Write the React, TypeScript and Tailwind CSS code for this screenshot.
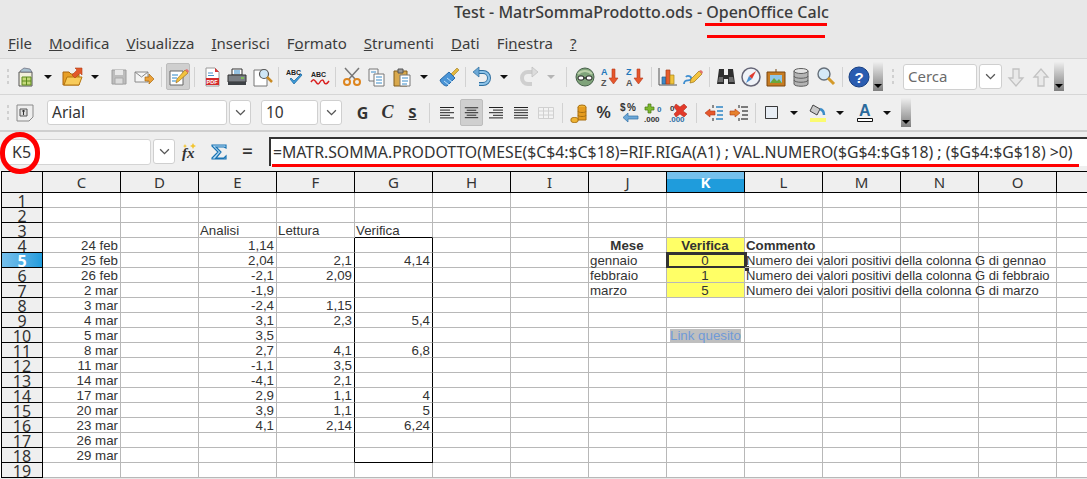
import React from "react"

const ui = "font-['Noto_Sans',sans-serif]"

function Ic({ children }: { children: React.ReactNode }) {
  return (
    <svg viewBox="0 0 22 22" className="w-[22px] h-[22px]">
      {children}
    </svg>
  )
}

function Slot({ children, className = "w-[25px]" }: { children?: React.ReactNode; className?: string }) {
  return <div className={`flex items-center justify-center shrink-0 h-full ${className}`}>{children}</div>
}

function Dd({ className = "w-[22px]", off = false }: { className?: string; off?: boolean }) {
  return (
    <Slot className={className}>
      <span className={`w-0 h-0 border-l-[4px] border-r-[4px] border-t-[4px] border-l-transparent border-r-transparent ${off ? "border-t-[#b5b5b5]" : "border-t-[#111]"}`} />
    </Slot>
  )
}

function Sep({ className = "w-[8px]" }: { className?: string }) {
  return (
    <Slot className={className}>
      <span className="w-px h-[20px] bg-[#d2d2d2]" />
    </Slot>
  )
}

function Grip({ className }: { className: string }) {
  return (
    <Slot className={className}>
      <span className="flex flex-col gap-[3px]">
        <span className="w-[2px] h-[3px] bg-[#d0d0d0]" />
        <span className="w-[2px] h-[3px] bg-[#d0d0d0]" />
        <span className="w-[2px] h-[3px] bg-[#d0d0d0]" />
      </span>
    </Slot>
  )
}

function Overflow({ className }: { className: string }) {
  return (
    <div className={`w-[10px] h-[29px] shrink-0 bg-gradient-to-b from-[#eeeeee] to-[#7f7f7f] flex items-end justify-center pb-[3px] ${className}`}>
      <span className="w-0 h-0 border-l-[4px] border-r-[4px] border-t-[4px] border-l-transparent border-r-transparent border-t-black" />
    </div>
  )
}

function Chevron() {
  return (
    <svg viewBox="0 0 12 8" className="w-[11px] h-[7px]">
      <path d="M1 1.5 6 6.5 11 1.5" fill="none" stroke="#555" strokeWidth="1.5" />
    </svg>
  )
}

function Combo({ className }: { className: string }) {
  return (
    <div className={`h-[25px] bg-white border border-[#cfcfcf] rounded-[3px] flex items-center justify-center shrink-0 ${className}`}>
      <Chevron />
    </div>
  )
}

const lines = (x: number[], w: number[], c = "#222") => (
  <g stroke={c} strokeWidth="1">
    {x.map((v, i) => (
      <path key={i} d={`M${v} ${5.5 + i * 2.6}h${w[i]}`} />
    ))}
  </g>
)

const MiniText = ({ x, y, s, c, t, w = 700 }: { x: number; y: number; s: number; c: string; t: string; w?: number }) => (
  <text x={x} y={y} fontSize={s} fill={c} fontWeight={w} fontFamily="Liberation Sans, sans-serif">
    {t}
  </text>
)

function Toolbar1() {
  return (
    <div className="h-[36px] flex items-center pl-[3px] bg-[#efefef] border-b border-[#d6d6d6]">
      <Grip className="w-[9px]" />
      <Slot>
        <Ic>
          <path d="M5 6h13v14H5z" fill="#f2f0dc" stroke="#555" />
          <path d="M8 11h9v8H8z" fill="#c5d97a" stroke="#5d8a1c" />
          <path d="M8 15h9M12.500 11v8" stroke="#5d8a1c" />
          <path d="M6 5l4-3 6 1 2 3H7z" fill="#a9c0cf" stroke="#667" strokeWidth=".7" />
        </Ic>
      </Slot>
      <Dd />
      <Slot>
        <Ic>
          <path d="M2 6h6l2 2h8v11H2z" fill="#e79f27" stroke="#a9650e" />
          <path d="M3 19l3-8h15l-3 8z" fill="#f8cb5a" stroke="#b5760f" />
          <path d="M11 9l5-5-2-2h7v7l-2-2-5 5z" fill="#e2582a" stroke="#b43c14" strokeWidth=".6" />
        </Ic>
      </Slot>
      <Dd />
      <Slot>
        <Ic>
          <path d="M4 4h14v14H4z" fill="#bdbdbd" stroke="#9e9e9e" />
          <path d="M7 4h8v5H7z" fill="#e8e8e8" />
          <path d="M7 12h8v6H7z" fill="#dcdcdc" stroke="#aaa" />
        </Ic>
      </Slot>
      <Slot>
        <Ic>
          <path d="M2 6h13v10H2z" fill="#f5f5f5" stroke="#8a8a8a" />
          <path d="M2 6l6.500 5L15 6" fill="none" stroke="#8a8a8a" />
          <path d="M12 11h4V8l5 5-5 5v-3h-4z" fill="#eca23a" stroke="#a96a10" strokeWidth=".7" />
        </Ic>
      </Slot>
      <Sep className="w-[10px]" />
      <div className="w-[24px] h-[27px] bg-[#cfcfcf] border border-[#bdbdbd] rounded-[2px] flex items-center justify-center shrink-0">
        <Ic>
          <path d="M3 5h13v14H3z" fill="#fff" stroke="#666" />
          <path d="M5 9h6M5 12h5M5 15h4" stroke="#2c86c8" strokeWidth="1.200" />
          <path d="M9 17l1-4 8-9 3 3-9 8z" fill="#f3c33e" stroke="#a2701a" strokeWidth=".7" />
          <path d="M18 4l3 3 1-2-2-2z" fill="#e2726d" />
        </Ic>
      </div>
      <Sep className="w-[9px]" />
      <Slot>
        <Ic>
          <path d="M5 2h9l4 4v14H5z" fill="#fff" stroke="#999" />
          <path d="M14 2l4 4h-4z" fill="#d93636" />
          <path d="M7 7h5M7 9.500h6" stroke="#4a91c8" />
          <path d="M5 12h13v7H5z" fill="#d42a2a" />
          <MiniText x={5.600} y={18} s={5.500} c="#fff" t="PDF" />
        </Ic>
      </Slot>
      <Slot>
        <Ic>
          <path d="M6 3h10v6H6z" fill="#fff" stroke="#333" />
          <path d="M8 5h6M8 7h6" stroke="#2c86c8" />
          <path d="M2 9h18v7H2z" fill="#7a7f85" stroke="#333" />
          <path d="M2 16h18v3H2z" fill="#3d4145" />
          <path d="M15 12h3" stroke="#7fd14d" strokeWidth="1.500" />
        </Ic>
      </Slot>
      <Slot>
        <Ic>
          <path d="M3 4h10l3 3v13H3z" fill="#fff" stroke="#777" />
          <circle cx="13" cy="8" r="4.500" fill="#cfe6f5" stroke="#555" strokeWidth="1.200" />
          <path d="M16 11l5 5" stroke="#c98a22" strokeWidth="2.500" />
        </Ic>
      </Slot>
      <Sep />
      <Slot>
        <Ic>
          <MiniText x={2} y={9} s={7} c="#222" t="ABC" />
          <path d="M6 13l4 5 8-9-1-1-7 7-3-3z" fill="#3d9ad6" stroke="#1f6fa8" strokeWidth=".8" />
        </Ic>
      </Slot>
      <Slot>
        <Ic>
          <MiniText x={2} y={11} s={7} c="#222" t="ABC" />
          <path d="M2 16c2-3 3-3 5 0s3 2 4 0 3-3 4 0 3 2 5-1" fill="none" stroke="#d91f1f" strokeWidth="1.500" />
        </Ic>
      </Slot>
      <Sep className="w-[7px]" />
      <Slot>
        <Ic>
          <path d="M18 2 8 13M4 2l10 11" stroke="#777" strokeWidth="1.500" />
          <circle cx="6" cy="16" r="3" fill="none" stroke="#dd851e" strokeWidth="2" />
          <circle cx="16" cy="16" r="3" fill="none" stroke="#dd851e" strokeWidth="2" />
        </Ic>
      </Slot>
      <Slot>
        <Ic>
          <path d="M3 3h9v12H3z" fill="#f8f8f8" stroke="#777" />
          <path d="M8 8h10v12H8z" fill="#fff" stroke="#777" />
          <path d="M5 6h5M10 11h6M10 14h6M10 17h6" stroke="#3b8cc8" />
        </Ic>
      </Slot>
      <Slot>
        <Ic>
          <path d="M3 5h13v15H3z" fill="#d9a94d" stroke="#805d1c" />
          <path d="M7 3h5v4H7z" fill="#9a9a9a" stroke="#555" />
          <path d="M9 9h10v11H9z" fill="#fff" stroke="#777" />
          <path d="M11 12h6M11 15h6M11 18h5" stroke="#3b8cc8" />
        </Ic>
      </Slot>
      <Dd className="w-[20px]" />
      <Slot className="w-[25px] ml-[2px]">
        <Ic>
          <path d="M13 8l6-6 2 2-6 6z" fill="#e5b83d" stroke="#9a7a1c" strokeWidth=".6" />
          <path d="M2 14l9-8 6 6-8 8c-3 0-6-3-7-6z" fill="#4a94d6" stroke="#2b6ba8" />
          <path d="M6 15l5 4M9 12l5 4" stroke="#bfe0f7" />
        </Ic>
      </Slot>
      <Sep />
      <Slot>
        <Ic>
          <path d="M4 6h8a6 6 0 0 1 0 12H8" fill="none" stroke="#2d6d9e" strokeWidth="4" />
          <path d="M4 6h8a6 6 0 0 1 0 12H8" fill="none" stroke="#8dc3e8" strokeWidth="2.200" />
          <path d="M8 1v10L2 6z" fill="#6ca8d6" stroke="#2d6d9e" strokeWidth=".7" />
        </Ic>
      </Slot>
      <Dd className="w-[20px]" />
      <Slot className="w-[25px] ml-[2px]">
        <Ic>
          <path d="M18 6h-8a6 6 0 0 0 0 12h4" fill="none" stroke="#cfcfcf" strokeWidth="4" />
          <path d="M14 1v10l6-5z" fill="#dcdcdc" stroke="#bcbcbc" strokeWidth=".7" />
        </Ic>
      </Slot>
      <Dd className="w-[20px]" off />
      <Sep className="w-[11px]" />
      <Slot>
        <Ic>
          <circle cx="11" cy="11" r="9" fill="#7fa37a" stroke="#47604a" />
          <path d="M4 8c4-4 10-4 14 0" fill="none" stroke="#b9d0a9" strokeWidth="2" />
          <rect x="4" y="10" width="6" height="4" rx="2" fill="#fff" stroke="#222" />
          <rect x="12" y="10" width="6" height="4" rx="2" fill="#fff" stroke="#222" />
          <path d="M9 12h4" stroke="#222" />
        </Ic>
      </Slot>
      <Slot>
        <Ic>
          <MiniText x={2} y={9} s={9} c="#2277bb" t="A" />
          <MiniText x={2} y={20} s={9} c="#555" t="Z" />
          <path d="M13 3h3v9h3l-4.500 6L10 12h3z" fill="#e6572c" stroke="#b5371a" strokeWidth=".6" />
        </Ic>
      </Slot>
      <Slot>
        <Ic>
          <MiniText x={2} y={9} s={9} c="#2277bb" t="Z" />
          <MiniText x={2} y={20} s={9} c="#555" t="A" />
          <path d="M13 3h3v9h3l-4.500 6L10 12h3z" fill="#e6572c" stroke="#b5371a" strokeWidth=".6" />
        </Ic>
      </Slot>
      <Sep />
      <Slot>
        <Ic>
          <path d="M2 2v17h18" fill="none" stroke="#555" />
          <path d="M5 11h4v7H5z" fill="#3d89c9" stroke="#245f8e" strokeWidth=".7" />
          <path d="M9 4h4v14H9z" fill="#e65d2d" stroke="#a83c14" strokeWidth=".7" />
          <path d="M13 9h4v9h-4z" fill="#f1c33c" stroke="#a8841a" strokeWidth=".7" />
        </Ic>
      </Slot>
      <Slot>
        <Ic>
          <path d="M2 18c0-6 6-2 7-5s-4-4-5-2" fill="none" stroke="#3f8ed0" strokeWidth="1.800" />
          <path d="M8 17l1-4 8-8 3 3-8 8z" fill="#f3c33e" stroke="#9c7416" strokeWidth=".7" />
          <path d="M17 5l3 3 1-2-2-2z" fill="#e2726d" />
        </Ic>
      </Slot>
      <Sep />
      <Slot>
        <Ic>
          <path d="M4 3h5v6h4V3h5l2 15h-7v-5H9v5H2z" fill="#2e2e2e" />
          <path d="M4 11h4v5H3zM14 11h4l1 5h-5z" fill="#6b6b6b" />
        </Ic>
      </Slot>
      <Slot>
        <Ic>
          <circle cx="11" cy="11" r="9" fill="#f0f3f8" stroke="#667" strokeWidth="1.500" />
          <path d="M16 5l-4 8-3-3z" fill="#e03a2e" />
          <path d="M6 17l3-7 3 3z" fill="#4a8fd0" />
        </Ic>
      </Slot>
      <Slot>
        <Ic>
          <path d="M2 6h18v14H2z" fill="#c77c22" stroke="#7a4610" />
          <path d="M5 9h12v8H5z" fill="#8ec6ea" />
          <path d="M5 17l4-5 3 3 2-2 3 4z" fill="#6aa63c" />
          <path d="M11 6l0-3" stroke="#7a4610" />
        </Ic>
      </Slot>
      <Slot>
        <Ic>
          <path d="M4 5v13c0 3 14 3 14 0V5z" fill="#b4b4b4" stroke="#5f5f5f" />
          <ellipse cx="11" cy="5" rx="7" ry="2.500" fill="#e3e3e3" stroke="#5f5f5f" />
          <path d="M4 10c0 3 14 3 14 0M4 14c0 3 14 3 14 0" fill="none" stroke="#5f5f5f" />
        </Ic>
      </Slot>
      <Slot>
        <Ic>
          <circle cx="9" cy="8" r="6" fill="#d5e9f7" stroke="#66707a" strokeWidth="1.400" />
          <path d="M13 12l6 6" stroke="#d49a2a" strokeWidth="3" />
        </Ic>
      </Slot>
      <Sep />
      <Slot>
        <Ic>
          <circle cx="11" cy="11" r="10" fill="#2a5cb0" stroke="#173f82" />
          <MiniText x={6.500} y={17} s={15} c="#fff" t="?" />
        </Ic>
      </Slot>
      <Overflow className="ml-[2px]" />
      <Grip className="w-[20px]" />
      <div className={`${ui} w-[74px] h-[26px] bg-white border border-[#d0d0d0] rounded-[3px] flex items-center pl-[4px] text-[15px] text-[#6b6b6b] shrink-0`}>Cerca</div>
      <Combo className="w-[23px] ml-[2px]" />
      <Slot className="w-[25px] ml-px">
        <Ic>
          <path d="M8 3h6v9h4l-7 8-7-8h4z" fill="#e9e9e9" stroke="#c2c2c2" strokeWidth="1.300" />
        </Ic>
      </Slot>
      <Slot>
        <Ic>
          <path d="M8 20h6v-9h4l-7-8-7 8h4z" fill="#e9e9e9" stroke="#c2c2c2" strokeWidth="1.300" />
        </Ic>
      </Slot>
      <Overflow className="ml-[1px]" />
    </div>
  )
}

function Toolbar2() {
  return (
    <div className="h-[37px] flex items-center pl-[3px] bg-[#efefef] border-b-2 border-[#cfcfcf]">
      <Grip className="w-[9px]" />
      <Slot>
        <Ic>
          <path d="M3 3h16v12l-4 4H3z" fill="#eeeeee" stroke="#8a8a8a" />
          <path d="M6 7h7v7H6z" fill="#dddddd" stroke="#555" />
          <path d="M9.500 8v5M8 9h3" stroke="#333" />
        </Ic>
      </Slot>
      <div className="w-[180px] h-[25px] ml-[10px] bg-white border border-[#d0d0d0] rounded-[3px] flex items-center pl-[4px] text-[#333] text-[15.500px] font-['Noto_Sans',sans-serif] shrink-0">Arial</div>
      <Combo className="w-[22px] ml-[2px]" />
      <div className={`${ui} w-[57px] h-[25px] ml-[10px] bg-white border border-[#d0d0d0] rounded-[3px] flex items-center pl-[4px] text-[#333] text-[15.500px] shrink-0`}>10</div>
      <Combo className="w-[22px] ml-[2px]" />
      <Slot className="w-[25px] ml-[8px]">
        <span className={`${ui} font-bold text-[16px] text-[#333]`}>G</span>
      </Slot>
      <Slot>
        <span className="font-['Liberation_Serif',serif] italic font-bold text-[18px] text-[#333]">C</span>
      </Slot>
      <Slot>
        <span className={`${ui} font-bold text-[15px] text-[#333] underline`}>S</span>
      </Slot>
      <Sep className="w-[9px]" />
      <Slot><Ic>{lines([4, 4, 4, 4, 4], [14, 10, 14, 10, 14])}</Ic></Slot>
      <div className="w-[23px] h-[27px] ml-[1px] bg-[#cfcfcf] border border-[#bdbdbd] rounded-[2px] flex items-center justify-center shrink-0">
        <Ic>{lines([4, 6, 4, 6, 4], [14, 10, 14, 10, 14])}</Ic>
      </div>
      <Slot><Ic>{lines([4, 8, 4, 8, 4], [14, 10, 14, 10, 14])}</Ic></Slot>
      <Slot><Ic>{lines([4, 4, 4, 4, 4], [14, 14, 14, 14, 14])}</Ic></Slot>
      <Slot>
        <Ic>
          <path d="M3.500 5.500h15v11h-15zM3.500 9h15M3.500 13h15M8.500 5.500v11M13.500 5.500v11" fill="#f3f3f3" stroke="#d0d0d0" />
        </Ic>
      </Slot>
      <Sep className="w-[8px]" />
      <Slot>
        <Ic>
          <ellipse cx="14" cy="5" rx="4" ry="2" fill="#efb434" stroke="#a86f10" />
          <path d="M10 5v13h8V5" fill="#e59c20" stroke="#a86f10" />
          <path d="M10 9c0 2 8 2 8 0M10 13c0 2 8 2 8 0" fill="none" stroke="#a86f10" />
          <path d="M3 17c0-2 7-2 7 0v2c0 2-7 2-7 0z" fill="#efb434" stroke="#a86f10" />
        </Ic>
      </Slot>
      <Slot>
        <span className="font-['Liberation_Sans',sans-serif] font-bold text-[16px] text-[#333]">%</span>
      </Slot>
      <Slot>
        <Ic>
          <MiniText x={2} y={9} s={10} c="#333" t="$" />
          <MiniText x={9} y={9} s={10} c="#333" t="%" />
          <path d="M20 14H10v-3l-5 4.500 5 4.500v-3h10z" fill="#6da8d8" stroke="#2f70a6" strokeWidth=".7" />
        </Ic>
      </Slot>
      <Slot>
        <Ic>
          <path d="M5 2h3v3h3v3H8v3H5V8H2V5h3z" fill="#7dba2e" stroke="#477513" strokeWidth=".7" />
          <MiniText x={14} y={10} s={8} c="#2f70a6" t="0" />
          <MiniText x={1} y={20} s={8} c="#333" t=".000" />
        </Ic>
      </Slot>
      <Slot>
        <Ic>
          <MiniText x={2} y={9} s={8} c="#333" t="0" />
          <path d="M8 2l4 3 4-3 3 3-4 4 4 3-3 3-4-3-4 3-2-3 3-3-3-4z" fill="#e23a2a" stroke="#a4200f" strokeWidth=".5" />
          <MiniText x={1} y={20} s={8} c="#2f70a6" t=".000" />
        </Ic>
      </Slot>
      <Sep className="w-[10px]" />
      <Slot>
        <Ic>
          <path d="M2 11l5-4v2h5v4H7v2z" fill="#e6572c" stroke="#b03614" strokeWidth=".6" />
          <path d="M13 5h7M14 9h6M14 13h6M13 17h7" stroke="#2f86c6" strokeWidth="1.300" />
          <path d="M10 3v3M10 16v3" stroke="#222" />
        </Ic>
      </Slot>
      <Slot>
        <Ic>
          <path d="M12 11L7 7v2H2v4h5v2z" fill="#e6812c" stroke="#b03614" strokeWidth=".6" />
          <path d="M13 5h7M14 9h6M14 13h6M13 17h7" stroke="#555" strokeWidth="1.300" />
          <path d="M11 3v3M11 16v3" stroke="#222" />
        </Ic>
      </Slot>
      <Sep className="w-[8px]" />
      <Slot>
        <svg viewBox="0 0 14 14" className="w-[13px] h-[13px]">
          <path d="M.5.500h13v13H.5z" fill="#e8eef5" stroke="#222" />
        </svg>
      </Slot>
      <Dd className="w-[20px]" />
      <Slot className="w-[25px] ml-[1px]">
        <Ic>
          <path d="M6 3l7 4-3 6-7-4z" fill="#c9c9c9" stroke="#444" />
          <path d="M13 7c3 1 4 3 4 6" fill="none" stroke="#3b8cc8" strokeWidth="2.500" />
          <path d="M3 16h16v4H3z" fill="#fbfb70" />
        </Ic>
      </Slot>
      <Dd className="w-[20px]" />
      <Slot className="w-[25px] ml-[2px]">
        <Ic>
          <MiniText x={5} y={14} s={16} c="#2b6a9c" t="A" />
          <path d="M3.500 16.500h15v3h-15z" fill="#fff" stroke="#111" />
        </Ic>
      </Slot>
      <Dd className="w-[20px]" />
      <Overflow className="ml-[4px]" />
    </div>
  )
}

function FormulaBar() {
  return (
    <div className="h-[39px] flex items-center pl-[3px] bg-[#efefef]">
      <div className={`${ui} w-[148px] h-[26px] bg-white border border-[#d4d4d4] rounded-[3px] flex items-center pl-[8px] text-[16px] text-[#333] shrink-0`}>K5</div>
      <Combo className="w-[22px] ml-[2px]" />
      <Slot className="w-[25px] ml-[2px]">
        <Ic>
          <text x="3" y="17" fontSize="15" fontStyle="italic" fontWeight="700" fill="#333" fontFamily="Liberation Serif, serif">fx</text>
          <path d="M14 2l1 2 2 1-2 1-1 2-1-2-2-1 2-1zM6 3l.7 1.500L8 5l-1.300.7L6 7l-.7-1.300L4 5l1.300-.5z" fill="#f2c531" />
        </Ic>
      </Slot>
      <Slot className="w-[25px] ml-[4px]">
        <Ic>
          <path d="M4 4h14v3l-2-1H8l5 5-5 6h8l2-2v3H4v-1l6-6-6-6z" fill="#bfe0f7" stroke="#1873b3" strokeWidth="1.200" />
        </Ic>
      </Slot>
      <Slot className="w-[25px] ml-[4px]">
        <span className={`${ui} text-[19px] text-[#333] font-medium`}>=</span>
      </Slot>
      <div className={`${ui} flex-1 h-[29px] ml-[9px] bg-white border-l-2 border-t-2 border-[#333] flex items-center pl-[2px] text-[15.800px] text-[#333] whitespace-nowrap overflow-hidden`}>
        =MATR.SOMMA.PRODOTTO(MESE($C$4:$C$18)=RIF.RIGA(A1) ; VAL.NUMERO($G$4:$G$18) ; ($G$4:$G$18) &gt;0)
      </div>
    </div>
  )
}

type Cell = { t: string; r?: boolean; b?: boolean; c?: boolean; y?: boolean; n?: boolean }
const R = (t: string): Cell => ({ t, r: true })

const data: Record<string, Cell> = {
  E3: { t: "Analisi" }, F3: { t: "Lettura" }, G3: { t: "Verifica" },
  C4: R("24 feb"), E4: R("1,14"),
  C5: R("25 feb"), E5: R("2,04"), F5: R("2,1"), G5: R("4,14"),
  C6: R("26 feb"), E6: R("-2,1"), F6: R("2,09"),
  C7: R("2 mar"), E7: R("-1,9"),
  C8: R("3 mar"), E8: R("-2,4"), F8: R("1,15"),
  C9: R("4 mar"), E9: R("3,1"), F9: R("2,3"), G9: R("5,4"),
  C10: R("5 mar"), E10: R("3,5"),
  C11: R("8 mar"), E11: R("2,7"), F11: R("4,1"), G11: R("6,8"),
  C12: R("11 mar"), E12: R("-1,1"), F12: R("3,5"),
  C13: R("14 mar"), E13: R("-4,1"), F13: R("2,1"),
  C14: R("17 mar"), E14: R("2,9"), F14: R("1,1"), G14: R("4"),
  C15: R("20 mar"), E15: R("3,9"), F15: R("1,1"), G15: R("5"),
  C16: R("23 mar"), E16: R("4,1"), F16: R("2,14"), G16: R("6,24"),
  C17: R("26 mar"), C18: R("29 mar"),
  J4: { t: "Mese", b: true, c: true }, K4: { t: "Verifica", b: true, c: true, y: true }, L4: { t: "Commento", b: true },
  J5: { t: "gennaio" }, K5: { t: "0", c: true, y: true }, L5: { t: "Numero dei valori positivi della colonna G di gennao", n: true },
  J6: { t: "febbraio" }, K6: { t: "1", c: true, y: true }, L6: { t: "Numero dei valori positivi della colonna G di febbraio", n: true },
  J7: { t: "marzo" }, K7: { t: "5", c: true, y: true }, L7: { t: "Numero dei valori positivi della colonna G di marzo", n: true },
}

const cols = ["C", "D", "E", "F", "G", "H", "I", "J", "K", "L", "M", "N", "O", "P"]
const rows = Array.from({ length: 19 }, (_, i) => i + 1)

function ColHead({ name }: { name: string }) {
  const on = name === "K"
  return (
    <div className={`${ui} relative w-[78px] shrink-0 h-full flex items-center justify-center text-[15px] border-r border-black ${on ? "bg-[#1f9cdc] text-white font-bold" : "bg-[#efefef] text-[#333]"}`}>
      {on && <span className="absolute inset-x-0 top-0 h-[7px] bg-[#75c0ec]" />}
      <span className="relative">{name === "P" ? "" : name}</span>
    </div>
  )
}

function SheetCell({ col, row }: { col: string; row: number }) {
  const d = data[col + row]
  const boxed = (col === "G" || col === "F") && row >= 4 && row <= 18
  const bottomBlack = col === "G" && (row === 3 || row === 18)
  return (
    <div
      className={`relative w-[78px] shrink-0 h-full pl-px pr-[2px] leading-[15px] whitespace-nowrap border-r border-b ${
        boxed ? "border-r-black" : "border-r-[#b8b8b8]"
      } ${bottomBlack ? "border-b-black" : "border-b-[#b8b8b8]"} ${d?.y ? "bg-[#ffff66]" : ""} ${
        d?.r ? "text-right" : d?.c ? "text-center" : "text-left"
      } ${d?.b ? "font-bold" : ""} ${d?.n ? "text-[13px]" : ""} ${col === "L" && row === 4 ? "pl-[4px]" : ""}`}
    >
      <span className="relative z-10">{d?.t}</span>
      {col === "K" && row === 5 && (
        <span className="absolute -left-px -top-px w-[81px] h-[17px] border-[3px] border-[#333]">
          <span className="absolute right-[-5px] bottom-[-5px] w-[5px] h-[5px] bg-[#333]" />
        </span>
      )}
      {col === "K" && row === 10 && (
        <span className="absolute left-[3px] top-px h-[14px] bg-[#bfbfbf] text-[#6f9ad8] leading-[14px]">Link quesito</span>
      )}
    </div>
  )
}

function Sheet() {
  return (
    <div className="font-['Liberation_Sans',sans-serif] text-[13.300px] text-[#333] bg-white">
      <div className="h-[22px] flex border-t border-b border-black ml-px">
        <div className="w-[42px] shrink-0 border-l border-r border-black bg-[#efefef]" />
        {cols.map((c) => (
          <ColHead key={c} name={c} />
        ))}
      </div>
      {rows.map((n) => (
        <div key={n} className="h-[15px] flex ml-px">
          <div
            className={`${ui} w-[42px] shrink-0 h-full overflow-hidden border border-t-0 border-black text-center text-[16px] leading-[17px] ${
              n === 5 ? "bg-gradient-to-r from-[#75c0ec] to-[#1f9cdc] text-white font-bold" : "bg-[#efefef] text-[#333]"
            }`}
          >
            {n}
          </div>
          {cols.map((c) => (
            <SheetCell key={c} col={c} row={n} />
          ))}
        </div>
      ))}
    </div>
  )
}

export default function App() {
  return (
    <div className="relative w-[1087px] h-[479px] overflow-hidden bg-[#e8e8e8]">
      <div className={`${ui} h-[24px] pl-[454px] flex items-center text-[#3c3c3c] text-[16px] font-medium whitespace-nowrap`}>
        Test - MatrSommaProdotto.ods - OpenOffice Calc
      </div>
      <nav className={`${ui} h-[35px] pt-[4px] pl-[8px] flex items-center gap-[17px] text-[15px] text-[#3c3c3c] border-b border-[#d6d6d6]`}>
        <span><u>F</u>ile</span>
        <span><u>M</u>odifica</span>
        <span><u>V</u>isualizza</span>
        <span><u>I</u>nserisci</span>
        <span>F<u>o</u>rmato</span>
        <span><u>S</u>trumenti</span>
        <span><u>D</u>ati</span>
        <span>Fi<u>n</u>estra</span>
        <span><u>?</u></span>
      </nav>
      <Toolbar1 />
      <Toolbar2 />
      <FormulaBar />
      <Sheet />

      {/* red annotations drawn on top of the screenshot */}
      <span className="absolute z-20 left-[705px] top-[23px] w-[122px] h-[3px] bg-[#ff0000]" />
      <span className="absolute z-20 left-[707px] top-[35px] w-[118px] h-[3px] bg-[#ff0000]" />
      <span className="absolute z-20 left-[272px] top-[164px] w-[807px] h-[3px] bg-[#ff0000]" />
      <span className="absolute z-20 left-[0px] top-[132px] w-[40px] h-[42px] rounded-full border-[5px] border-[#ff0000]" />
    </div>
  )
}
